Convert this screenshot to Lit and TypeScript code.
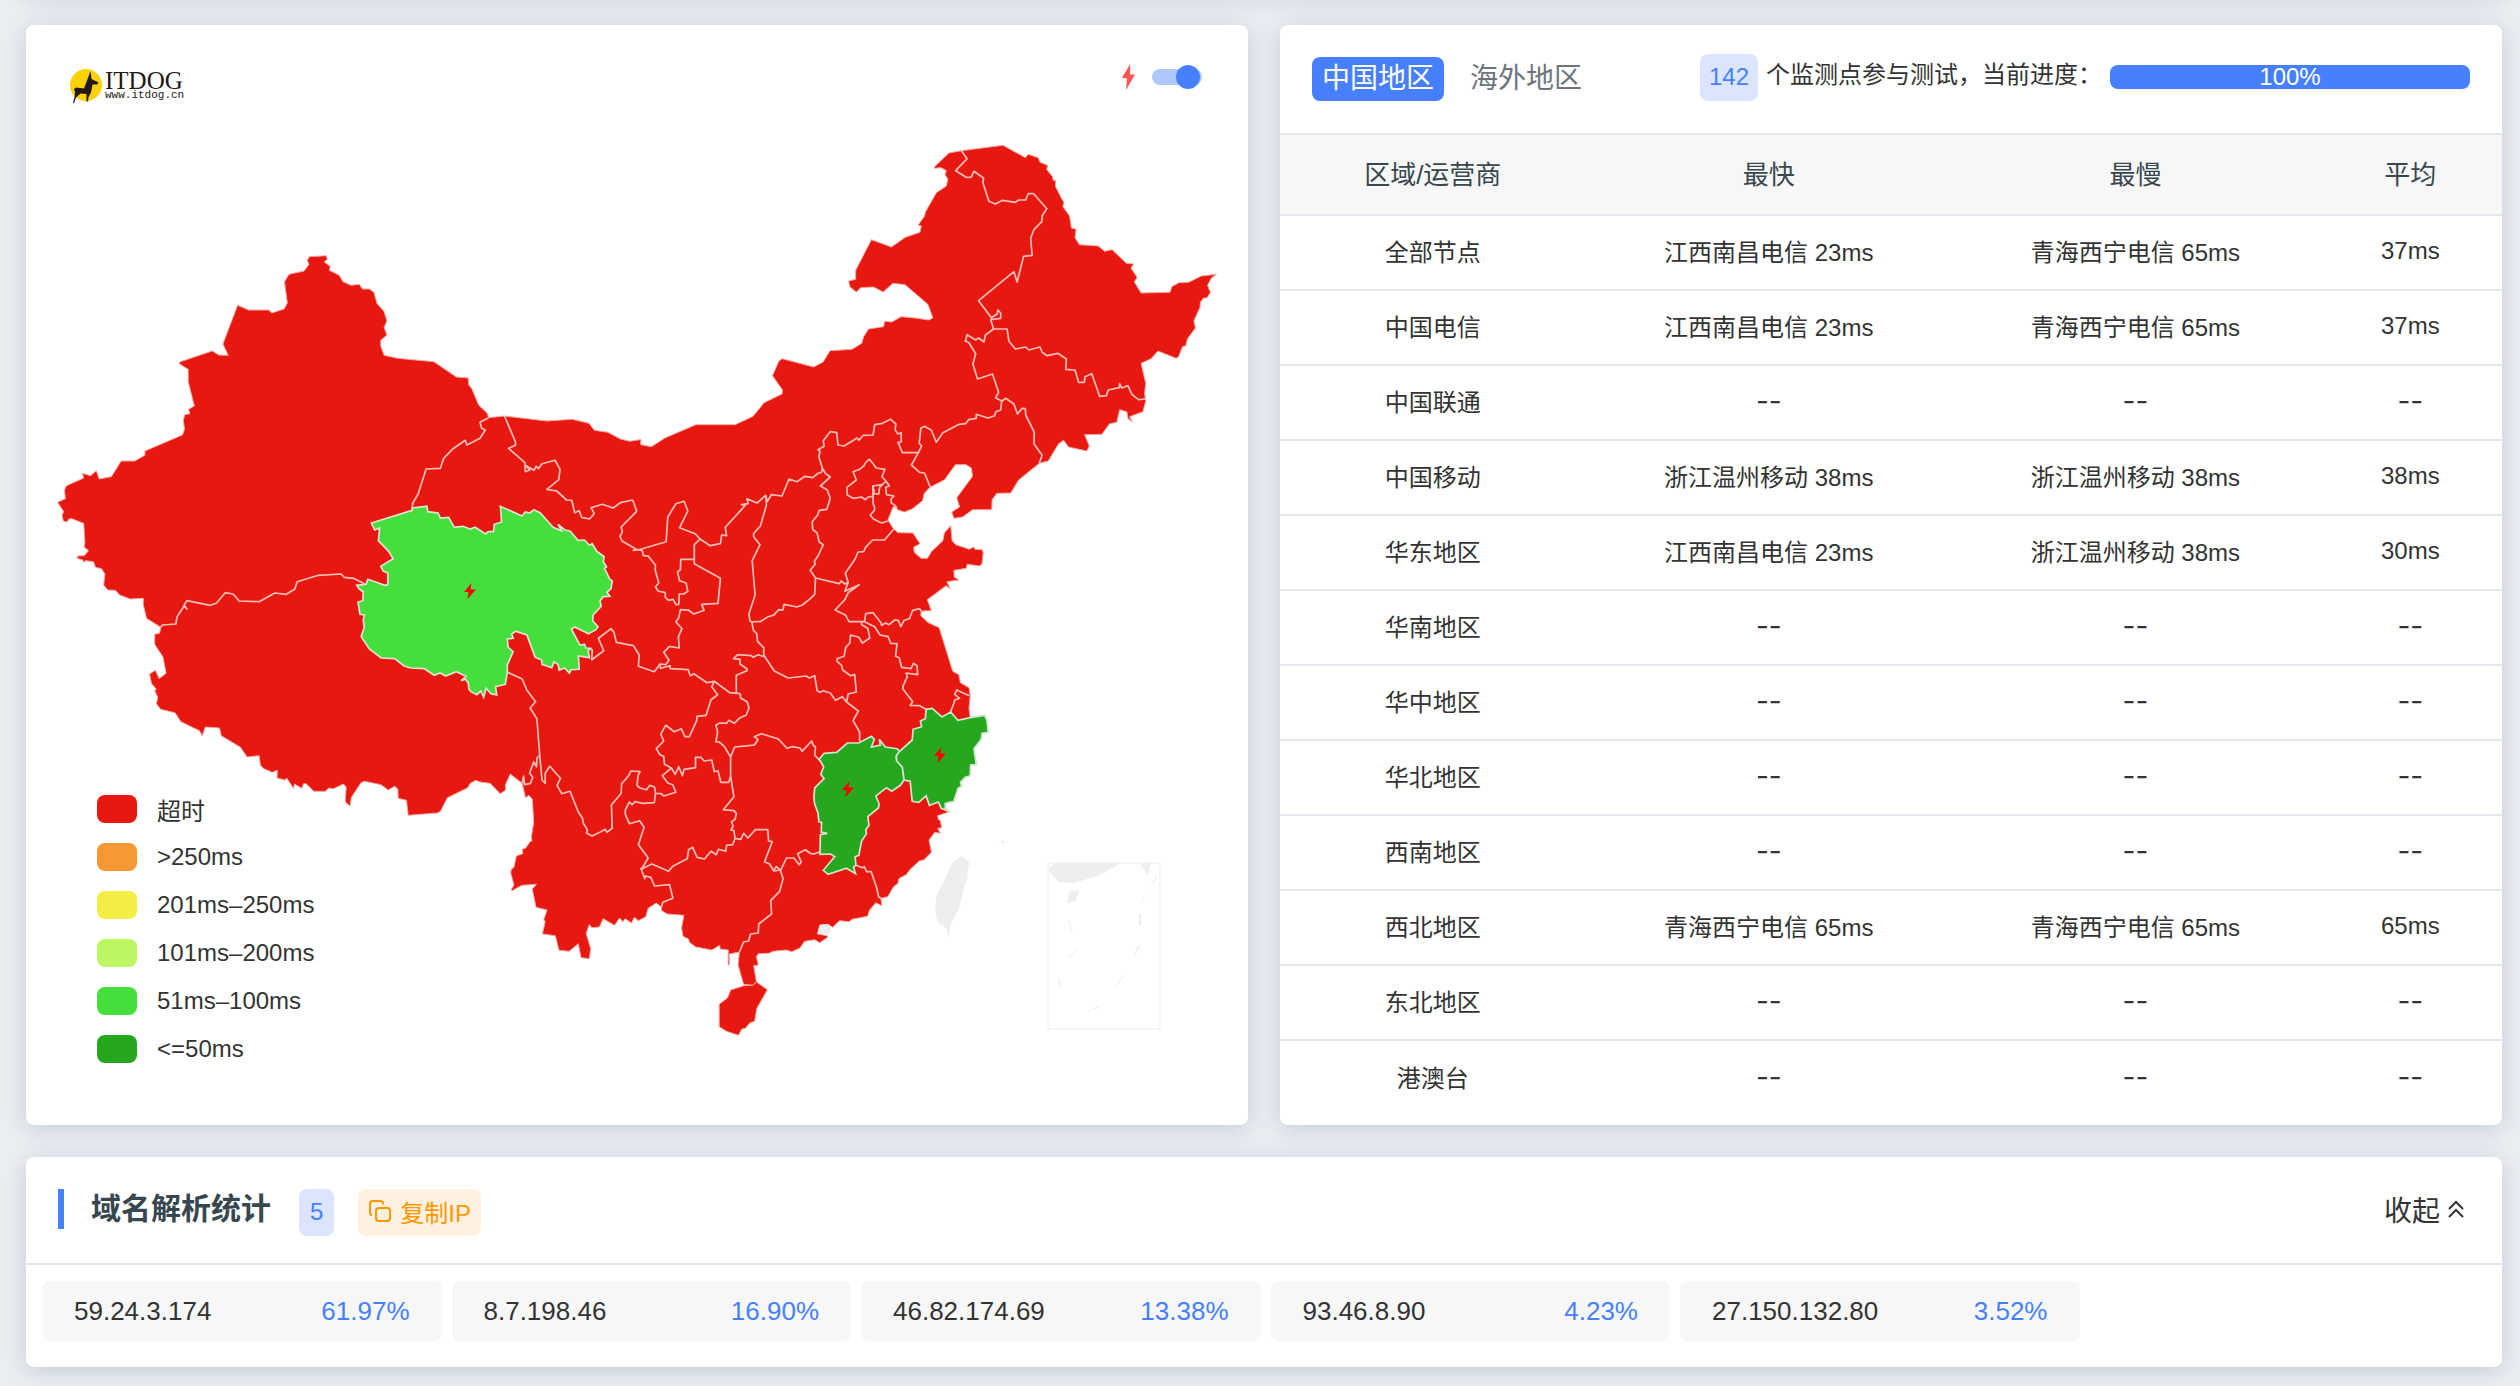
import { LitElement, html, css, svg } from "lit";
import { customElement, state } from "lit/decorators.js";

/* ---------- map geometry ---------- */

// Coordinates are digitised on overlapping sheets, each with its own origin and scale.
const sheet = (ox: number, oy: number, sx: number, sy: number) => (points: string): string =>
  points
    .trim()
    .split(/\s+/)
    .map((p) => {
      const [x, y] = p.split(",").map(Number);
      return `${(ox + x / sx).toFixed(1)},${(oy + y / sy).toFixed(1)}`;
    })
    .join(" ");

const northEast = sheet(700, 100, 2.8, 3);
const west = sheet(0, 240, 2.45, 3);
const east = sheet(600, 380, 2.45, 3);
const south = sheet(480, 640, 2.1778, 3);
const southWest = sheet(60, 640, 2.9037, 3);

const MAINLAND = [
  west(`141,787 160,776 158,750 162,738 205,714 202,700 222,707 236,692 243,717 273,710 297,663 330,663 355,646
    355,633 447,585 452,568 449,540 453,524 465,521 462,508 476,498 461,425 461,388 440,372 440,366 520,333
    536,345 559,346 546,312 582,196 609,210 658,210 666,219 696,207 704,189 697,125 708,103 745,93 757,73
    753,61 758,50 799,47 802,58 794,66 809,79 807,91 831,106 840,125 860,136 880,133 888,147 905,147 916,157
    924,191 941,215 948,243 941,262 948,285 933,301 933,319 941,346 974,355 1063,365 1118,411 1147,414
    1148,434 1156,446 1173,496 1194,520 1197,533 1236,528 1340,543 1402,538 1443,550 1456,571 1489,577
    1520,597 1543,604 1568,599`),
  east(`100,179 100,194 126,200 159,174 235,134 331,134 375,109 402,68 446,42`),
  northEast(`231,870 203,827 221,783 230,776 318,801 345,786 364,752 426,748 453,730 458,710 472,687 514,680
    517,664 537,666 563,650 603,654 640,660 652,654 638,613 574,554 540,550 513,576 486,561 450,563 438,576
    420,561 416,543 436,538 436,511 480,419 536,441 575,412 616,397 620,378 611,375 629,348 631,336 662,278
    690,258 694,237 686,224 690,212 675,203 657,205 657,200 697,159 732,152 848,136 911,173 919,163 947,173
    952,187 973,196 971,209 987,230 989,241 996,242 995,259 1015,301 1019,307 1016,320 1035,348 1040,384
    1053,388 1050,413 1062,434 1115,438 1133,454 1154,449 1194,490 1214,492 1207,505 1224,532 1216,546
    1235,579 1316,577 1321,560 1341,548 1368,547 1404,528 1446,523 1432,534 1421,556 1429,577 1420,593
    1409,595 1401,607 1400,622 1383,662 1387,684 1365,716 1360,737 1351,740 1340,770 1333,775 1282,753
    1263,776 1235,790 1248,850 1245,880 1248,903 1240,935 1203,950 1211,967 1198,955 1195,935 1175,929
    1167,967 1147,971 1125,1003 1077,1004 1090,1038 1083,1053 1032,1041 1018,1021 1004,1031 975,1083
    950,1090 892,1140 870,1179 831,1180 818,1199 817,1229 763,1229 735,1251 711,1255 705,1236 727,1221
    719,1193 763,1129 760,1104 745,1094 715,1094 685,1139 644,1162 628,1180 623,1202 594,1227 572,1236
    553,1229 549,1218 540,1222 526,1260 540,1284 554,1298 596,1299 616,1331 598,1342 600,1357 619,1375
    637,1375 648,1355 680,1322 684,1299 702,1277 706,1322 716,1334 754,1348 766,1341 770,1348 790,1349
    793,1357 790,1390 784,1398 748,1393 746,1405 711,1411`),
  east(`868,592 879,600 850,605 858,626 848,617 802,659 812,692 787,693 786,707 804,728 831,743 864,874 879,884
    883,908 904,923 907,947 904,985 907,1013 942,1006 948,1020 951,1057 936,1060 934,1078 916,1106 922,1154
    908,1155 907,1187 895,1192 883,1207 886,1218 877,1225 867,1264 846,1270 846,1285 856,1295 847,1299
    827,1307 829,1319 834,1322 837,1343 827,1345 834,1360 820,1357 806,1380 812,1417 793,1440 783,1442
    760,1468 750,1484`),
  south(`912,716 910,730 900,741 888,770 873,775 875,797 862,788 848,811 844,829 810,838 804,845 783,842
    768,862 758,853 740,855 735,882 756,887 757,892 740,908 729,899 707,904 697,924 679,935 667,930 638,934
    629,940 606,941 602,950 606,975 596,977 602,1026 594,1036 574,1033 562,975 565,936 543,942 543,975
    540,973 541,930 523,927 522,916 505,930 470,921 456,907 454,897 442,889 439,864 444,826 408,822 396,812
    395,801 384,789 366,805 361,830 345,842 336,832 330,849 316,836 311,845 304,834 293,856 268,836 260,861
    244,863 238,854 231,880 241,926 238,956 220,953 214,911 194,934 172,931 164,887 136,882 142,845 139,839
    146,810 122,802 114,747 123,733 91,736 70,752 68,749 74,735 67,700 68,688 74,682 79,648 93,641 93,626
    99,625 109,605 113,603 112,590 117,547 114,477 106,466 99,473 92,430 66,402 55,435 56,450 44,461 22,430
    0,426`),
  southWest(`1207,421 1190,431 1184,443 1125,473 1105,514 1096,519 1011,526 1006,481 982,475 981,447 972,439
    953,450 932,434 884,424 874,428 846,472 842,498 828,486 831,441 823,432 794,446 780,444 771,454 737,454
    715,431 707,431 702,445 681,432 678,445 658,414 654,420 630,414 631,391 616,397 592,386 582,376 578,347
    543,351 524,322 468,287 463,264 422,261 413,287 405,272 351,245 334,218 292,208 280,191 284,172 275,152
    280,148 266,131 260,102 277,91 288,116 308,100 299,51 275,13 275,0`),
  west(`379,1183 391,1180 394,1162 359,1135 351,1094 351,1075 319,1077 293,1065 283,1051 264,1050 254,1035
    257,1002 249,986 234,982 229,965 210,962 205,967 203,960 189,955 190,948 206,947 217,932 206,921 208,906
    205,850 176,836 168,837 165,846 155,843 152,825 156,815`),
].join(" ");

const HAINAN = south(`602,1026 626,1049 603,1105 598,1144 588,1148 578,1165 570,1167 563,1186 537,1174 521,1160
  521,1093 539,1074 546,1050 575,1037 594,1036`);

const QINGHAI = west(`910,849 1010,811 1010,804 1046,799 1048,815 1073,819 1079,834 1099,832 1113,862 1134,859
  1152,867 1164,862 1190,882 1196,875 1209,875 1211,853 1229,846 1226,799 1279,828 1287,816 1298,819 1308,809
  1323,818 1355,862 1376,872 1367,853 1383,869 1397,874 1416,901 1432,900 1444,916 1451,911 1462,934 1480,950
  1478,965 1486,980 1481,985 1494,1018 1500,1023 1497,1046 1487,1057 1494,1069 1478,1070 1470,1082 1473,1099
  1453,1125 1452,1142 1465,1160 1460,1169 1442,1181 1408,1161 1400,1167 1421,1216 1432,1213 1436,1224
  1446,1225 1441,1234 1444,1253 1417,1248 1419,1288 1399,1289 1395,1299 1383,1284 1370,1290 1367,1273
  1357,1265 1352,1283 1328,1273 1327,1260 1311,1251 1291,1185 1263,1174 1254,1182 1257,1195 1243,1197
  1245,1222 1257,1235 1243,1275 1243,1297 1238,1333 1214,1340 1217,1365 1203,1361 1191,1345 1185,1371
  1178,1353 1168,1364 1154,1355 1149,1348 1147,1328 1140,1318 1130,1322 1142,1309 1118,1295 1092,1308
  1078,1299 1064,1306 1040,1286 1006,1284 990,1278 967,1256 934,1254 905,1227 885,1190 892,1163 890,1139
  893,1125 882,1123 877,1086 889,1082 890,1056 880,1047 874,1036 897,1033 901,1018 943,1036 950,1034 950,999
  939,993 933,979 963,956 952,934 927,902 930,864 918,870`);

const JIANGXI = east(`537,1138 549,1120 580,1117 606,1089 634,1089 665,1069 672,1078 665,1101 687,1095 684,1078
  699,1101 728,1106 734,1114 726,1128 727,1142 741,1162 745,1199 736,1216 715,1234 702,1223 676,1248 684,1273
  682,1284 656,1310 659,1336 651,1350 653,1361 641,1383 634,1426 625,1430 627,1455 621,1462 626,1481 604,1465
  559,1483 547,1471 575,1430 565,1422 539,1423 540,1364 557,1360 542,1356 543,1328 536,1325 534,1299 526,1272
  524,1255 526,1224 549,1196 541,1183 548,1160`);

const ZHEJIANG = east(`799,988 814,985 838,1011 859,996 877,1021 907,1013 942,1006 948,1020 951,1057 936,1060
  934,1078 916,1106 922,1154 908,1155 907,1187 895,1192 883,1207 886,1218 877,1225 867,1264 846,1270 846,1285
  856,1295 836,1285 829,1266 807,1276 799,1247 781,1267 765,1264 760,1204 745,1200 741,1162 727,1142 726,1128
  734,1114 765,1080 767,1048 788,1040 785,1023 797,1016`);

const BORDERS: string[] = [
  west(`1197,533 1176,547 1180,565 1189,570 1176,595 1144,615 1140,601 1110,626 1087,655 1079,685 1044,687
    1024,763 1011,790 1010,804`),
  west(`894,1032 866,1015 843,1012 836,1002 780,1006 728,1025 722,1048 701,1063 673,1059 635,1085 586,1083
    571,1062 552,1058 530,1090 515,1096 458,1082 451,1095 458,1107 451,1098 434,1130 431,1152 398,1155 394,1162`),
  west(`1236,528 1263,606 1263,616 1246,625 1286,668 1287,695 1298,690 1287,676 1308,691 1314,679 1319,686
    1328,671 1360,661 1372,688 1369,719 1340,748 1364,753 1388,780 1401,781 1408,818 1419,812 1425,832
    1444,837 1456,821 1448,803 1476,793 1502,804 1520,788 1550,780`),
  east(`80,360 90,394 52,441 55,455 49,469 54,483 92,510`),
  east(`80,511 95,509 162,485 166,411 186,371 206,364 215,393 195,443 233,461 245,477 231,494 231,538 198,538
    197,569 190,576 195,602 211,609 215,634 205,642 194,642 193,673 186,674 179,658 168,661 160,652 160,638
    142,633 136,620 144,609 135,569 136,556 118,528 106,527 104,512 95,509`),
  east(`231,538 231,551 295,595 289,670 249,673 255,691 230,702 216,690 197,689 193,713 186,726 201,746
    192,770 194,804 170,799 156,817 169,841 161,854 147,852 148,865 172,857 172,866 216,869 221,887 230,881
    262,908 280,904 318,938 344,941`),
  east(`245,477 270,497 295,491 298,465 310,467 307,442 356,376 347,374 363,371 360,356 385,369 406,346
    410,364 420,344 446,348 463,297 483,305 502,289 521,293 535,279 543,277`),
  west(`1446,1225 1451,1230 1450,1259 1479,1232 1466,1195 1497,1166 1504,1177 1510,1207 1552,1217`),
  east(`82,797 96,825 94,859 133,875 147,852`),
  east(`334,940 334,886 360,872 360,866 343,852 343,838 327,836 337,824 371,827 375,832 388,824 401,830`),
  east(`406,346 408,374 393,438 376,461 377,471 392,494 373,542 380,645 365,701 367,722 372,726 376,752
    384,760 386,784 401,803 401,825 427,873 461,894 505,888 513,894 526,887 532,932 539,937 547,932 564,939
    577,961 594,950 604,966 633,993 620,1022 636,1056 636,1084`),
  east(`543,277 545,265 552,280 564,291 540,318 557,330 564,355 556,388 537,391 533,405 520,425 521,448
    532,459 537,486 547,494 534,528 525,544 527,553 515,571 528,594 526,643 516,655 496,675 483,681 451,673
    448,690 438,689 425,706 412,710 394,724 372,726`),
  east(`545,265 536,230 539,215 534,209 549,199 547,182 564,155 580,158 583,195 598,198 630,174 634,181
    645,166 669,165 673,134 692,130 712,118 725,132 723,149 730,162 738,158 738,186 730,187 741,218 780,218
    788,198 782,190 786,145 795,139 812,151 824,187 840,158 880,133 896,131 903,119 922,115 922,103 950,114
    966,108 970,95 982,90 984,64`),
  east(`780,218 763,255 783,277 795,279 809,321`),
  east(`660,237 650,249 647,257 636,268 620,275 628,300 605,322 606,345 620,355 641,351 650,359 657,351
    669,349 668,318 691,314 701,304 691,290 698,268 677,264 660,237`),
  east(`701,304 709,318 700,322 702,344 720,348 713,357 714,370 722,375 726,388`),
  east(`669,349 669,370 673,384 672,392 662,405 670,417 690,429 705,423`),
  east(`668,318 672,336 668,342 683,342 685,322 693,312`),
  east(`720,447 697,480 668,480 650,503 646,515 632,516 625,537 601,580 608,607 600,634 635,614 608,638
    600,659 576,690 602,706 610,725 648,725 651,701 669,698 689,729 690,736 700,729 708,734 722,720 731,721
    737,740 745,721 758,716 766,691 783,686 787,693`),
  east(`528,594 586,611 591,603 600,612 608,607`),
  east(`641,725 641,734 656,745 661,774 643,789 634,772 614,765 612,789 602,802 598,829 581,836 581,844
    592,856 594,869 614,887 624,884 628,936 608,942 604,966`),
  east(`648,725 673,740 686,765 706,770 712,790 728,791 724,829 733,833 739,862 762,866 768,850 777,858
    778,884 750,879 753,890 742,919 742,927 766,965 760,976 783,977 799,988`),
  east(`859,996 870,959 881,955 869,943 874,930 905,947`),
  east(`280,904 274,920 288,944 272,959 260,1006 238,1009 237,1022 219,1070 208,1070 199,1046 182,1055
    161,1036 149,1062 156,1083 138,1106 147,1124 156,1129 158,1153 175,1164 184,1183 193,1160 202,1187
    206,1168 234,1163 234,1132 247,1132 255,1143 274,1140 280,1175 289,1172 296,1207 315,1207 320,1190
    320,1131 305,1100 292,1086 284,1086 288,1057 284,1036 293,1029 310,1030 316,1021 329,1030 343,1013
    358,1006 365,984 361,966 344,953 344,941`),
  east(`320,1131 330,1101 347,1099 378,1095 387,1079 378,1070 395,1061 437,1077 458,1105 471,1100 490,1104
    495,1114 519,1083 522,1095 528,1101 526,1125 537,1140`),
  east(`175,1164 153,1187 166,1209 178,1214 186,1237 156,1248 150,1241 136,1240 134,1222 122,1216 114,1229
    98,1224 91,1217 93,1187 98,1175 76,1173 70,1187 53,1211 52,1240 28,1275 30,1345 17,1357 13,1348 0,1357`),
  east(`136,1240 133,1268 104,1270 86,1265 79,1274 72,1266 62,1290 62,1303 72,1331 97,1322 108,1342 94,1394
    118,1434 102,1467 127,1452 168,1474 178,1459 214,1436 217,1409 227,1402 238,1432 256,1437 272,1414
    285,1424 290,1408 308,1414 310,1396 325,1394 331,1375`),
  east(`320,1190 328,1250 302,1289 328,1292 334,1300 331,1318 322,1326 326,1338 321,1350 328,1352 331,1375
    345,1378 352,1360 362,1374 381,1349 411,1349 413,1383 422,1385 403,1446 415,1451 426,1473 443,1470
    457,1434 475,1434 488,1454 493,1446 484,1421 503,1409 515,1420 524,1422 539,1415`),
  south(`819,676 833,683 837,680 842,695 852,695 864,743 868,770 873,775`),
  south(`638,694 645,680 654,690 660,716 652,755 633,782 635,822 607,852 606,879 589,882 585,903 574,906
    565,936`),
  south(`350,683 359,716 360,708 372,712 380,738 413,734 420,775 398,787 395,801`),
  south(`261,577 244,588 232,579 234,569 225,550 223,534 214,516 196,454 178,461 168,436 175,415 152,379
    142,400 142,430 135,420 130,345 124,236 109,204 121,185 102,150 92,117 60,97`),
  south(`130,345 124,355 123,380 117,366 108,400 115,412 110,430 97,434 95,408 92,430`),
  northEast(`732,152 748,176 716,212 745,232 759,232 767,214 794,234 792,248 809,304 827,312 847,301 883,307
    892,300 912,300 919,281 934,281 971,326 958,347 957,365 935,389 926,414 930,466 906,469 888,546 879,515
    780,602 816,653 832,642 834,630 842,640 842,655 814,659 822,687 860,687 865,724 883,747 912,741 921,750
    952,741 958,757 972,767 1002,760 1026,777 1024,808 1050,810 1060,847 1076,847 1078,830 1097,821 1119,889
    1138,887 1143,870 1174,863 1175,851 1181,864 1198,857 1210,884 1228,899 1248,897`),
  northEast(`822,687 799,705 795,726 780,714 772,720 748,704 743,724 752,727 772,761 764,792 777,837 819,822
    836,877 828,894 846,903 856,895 879,912 889,942 902,925 911,926 912,945 936,997 935,1031 958,1066
    950,1090`),
];

const INACTIVE: string[] = [
  south(`1050,648 1066,668 1062,690 1062,712 1054,745 1042,811 1026,850 1020,893 1016,866 998,848 991,815
    994,768 1029,668`),
  south(`1141,600 1141,609 1131,607`),
  south(`735,882 740,855 758,853 765,868 760,882`),
  south(`1252,670 1396,670 1348,706 1293,730 1260,726 1237,690`),
  south(`1438,670 1462,670 1454,706`),
  south(`1284,754 1305,750 1297,782 1277,790`),
  south(`1434,824 1440,824 1440,855 1434,855`),
  south(`1435,915 1436,922 1427,942 1425,940`),
  south(`1259,1016 1264,1022 1266,1043 1261,1034`),
];

const DASHES: string[] = [
  "1475,710 1463,735", "1448,765 1440,787", "1282,840 1289,875", "1298,926 1284,952",
  "1402,1005 1383,1046", "1347,1100 1326,1112",
].map(south);

const NODES = [
  { x: 464, y: 583 },
  { x: 934, y: 747 },
  { x: 842, y: 781 },
];

/* ---------- data ---------- */

const LEGEND = [
  { tone: "timeout", label: "超时" },
  { tone: "over250", label: ">250ms" },
  { tone: "to250", label: "201ms–250ms" },
  { tone: "to200", label: "101ms–200ms" },
  { tone: "to100", label: "51ms–100ms" },
  { tone: "to50", label: "<=50ms" },
];

const NONE = "--";
const ROWS: [string, string, string, string][] = [
  ["全部节点", "江西南昌电信 23ms", "青海西宁电信 65ms", "37ms"],
  ["中国电信", "江西南昌电信 23ms", "青海西宁电信 65ms", "37ms"],
  ["中国联通", NONE, NONE, NONE],
  ["中国移动", "浙江温州移动 38ms", "浙江温州移动 38ms", "38ms"],
  ["华东地区", "江西南昌电信 23ms", "浙江温州移动 38ms", "30ms"],
  ["华南地区", NONE, NONE, NONE],
  ["华中地区", NONE, NONE, NONE],
  ["华北地区", NONE, NONE, NONE],
  ["西南地区", NONE, NONE, NONE],
  ["西北地区", "青海西宁电信 65ms", "青海西宁电信 65ms", "65ms"],
  ["东北地区", NONE, NONE, NONE],
  ["港澳台", NONE, NONE, NONE],
];

const ADDRESSES = [
  { ip: "59.24.3.174", share: "61.97%" },
  { ip: "8.7.198.46", share: "16.90%" },
  { ip: "46.82.174.69", share: "13.38%" },
  { ip: "93.46.8.90", share: "4.23%" },
  { ip: "27.150.132.80", share: "3.52%" },
];

const base = css`
  * { box-sizing: border-box; }
  button { font: inherit; color: inherit; background: none; border: 0; padding: 0; cursor: pointer; }
  ul { list-style: none; margin: 0; padding: 0; }
`;

@customElement("latency-map")
export class LatencyMap extends LitElement {
  static styles = [
    base,
    css`
      :host { display: grid; }
      .map, .overlay { grid-area: 1 / 1; }
      .map { display: block; width: 100%; height: auto; }
      .province { fill: #e6180f; stroke: #f3a8a3; stroke-width: 1; stroke-linejoin: round; }
      .border { fill: none; stroke: #f9bfbb; stroke-width: 1.7; stroke-linejoin: round; }
      .fast { fill: #45de3c; stroke: #dde4d2; stroke-width: 1.7; }
      .fastest { fill: #26a71f; stroke: #cfe6cd; stroke-width: 1.7; }
      .inactive { fill: #eeeeee; }
      .frame { fill: none; stroke: #f6f6f6; stroke-width: 2; }
      .dash { fill: none; stroke: #eeeeee; stroke-width: 1; }
      .node { fill: #ff0000; }
      .overlay { display: flex; flex-direction: column; justify-content: space-between; padding: 36px 46px 62px 44px; }
      .top { display: flex; justify-content: space-between; align-items: flex-start; }
      .logo { display: block; width: 120px; height: 48px; }
      .disc { fill: #fbd108; }
      .dog { fill: #231815; }
      .brand { font: 25px "Liberation Serif", serif; fill: #231815; }
      .site { font: 11px "Liberation Mono", monospace; fill: #231815; }
      .effect { display: flex; align-items: center; gap: 17px; height: 32px; }
      .bolt { display: block; width: 13px; height: 26px; fill: #ff5252; }
      .switch {
        appearance: none; margin: 0; width: 50px; height: 16px; border-radius: 8px;
        background: #aec7ff; display: flex; align-items: center; cursor: pointer;
      }
      .switch::before { content: ""; width: 24px; height: 24px; border-radius: 50%; background: #4680ff; flex: none; }
      .switch:checked { justify-content: flex-end; padding-right: 2px; }
      .legend { display: grid; gap: 20px; padding-left: 27px; }
      .item { display: flex; align-items: center; gap: 20px; height: 28px; font-size: 24px; color: #333333; }
      .swatch { width: 40px; height: 28px; border-radius: 8px; }
      .timeout { background: #e6180f; }
      .over250 { background: #f79834; }
      .to250 { background: #f6ed44; }
      .to200 { background: #bef663; }
      .to100 { background: #45de3c; }
      .to50 { background: #26a71f; }
    `,
  ];

  render() {
    return html`
      <svg class="map" viewBox="26 25 1222 1100" role="img" aria-label="中国地区">
        <polygon class="province" points=${MAINLAND}></polygon>
        <polygon class="province" points=${HAINAN}></polygon>
        ${BORDERS.map((b) => svg`<polyline class="border" points=${b}></polyline>`)}
        <polygon class="fast" points=${QINGHAI}></polygon>
        <polygon class="fastest" points=${JIANGXI}></polygon>
        <polygon class="fastest" points=${ZHEJIANG}></polygon>
        <rect class="frame" x="1048" y="863" width="112" height="166"></rect>
        ${INACTIVE.map((p) => svg`<polygon class="inactive" points=${p}></polygon>`)}
        ${DASHES.map((p) => svg`<polyline class="dash" points=${p}></polyline>`)}
        ${NODES.map(
          (n) => svg`<path class="node" transform="translate(${n.x} ${n.y})" d="M7.5 0 0 9H4.5L3.5 16 12 6.5H6.5Z"></path>`
        )}
      </svg>
      <div class="overlay">
        <div class="top">
          <svg class="logo" viewBox="0 0 120 48" role="img" aria-label="ITDOG www.itdog.cn">
            <circle class="disc" cx="16" cy="24" r="16"></circle>
            <path class="dog" d="M20.500 10 21.500 18 28.500 21.500 27 23.500 22.500 23.500 21 31.500 18.500 36 18 40.500H16.500L16.500 33 10.500 32.500 6 36.500 4 42.500 3 42 4.500 36 5 31 4 28 6 26.500 14 27.500 17 19.500Z"></path>
            <text class="brand" x="35" y="28">ITDOG</text>
            <text class="site" x="35" y="37">www.itdog.cn</text>
          </svg>
          <label class="effect">
            <svg class="bolt" viewBox="0 0 13 26" aria-hidden="true"><path d="M8.300 0 0 13.700 5 14.400 4 26 13 10.400H8Z"></path></svg>
            <input class="switch" type="checkbox" checked />
          </label>
        </div>
        <ul class="legend">
          ${LEGEND.map((l) => html`<li class="item"><span class="swatch ${l.tone}"></span>${l.label}</li>`)}
        </ul>
      </div>
    `;
  }
}

@customElement("region-table")
export class RegionTable extends LitElement {
  @state() private tab = 0;

  static styles = [
    base,
    css`
      :host { display: block; }
      .head { display: flex; align-items: center; justify-content: space-between; height: 110px; padding: 0 32px; border-bottom: 2px solid #e2e8ee; }
      .tabs { display: flex; gap: 16px; }
      .tab { height: 44px; padding: 0 10px; border-radius: 8px; font-size: 28px; line-height: 42px; color: #6c757d; }
      .active { background: #4680ff; color: #ffffff; }
      .status { display: flex; align-items: center; gap: 8px; padding-bottom: 4px; font-size: 24px; color: #333333; white-space: nowrap; }
      .count { display: block; height: 47px; line-height: 46px; padding: 0 9px; border-radius: 8px; background: #dbe5ff; color: #4680ff; }
      .progress { line-height: 44px; padding-bottom: 4px; }
      .bar { width: 360px; height: 24px; border-radius: 8px; background: #e9ecef; }
      .fill { height: 24px; line-height: 24px; border-radius: 8px; background: #4680ff; color: #ffffff; text-align: center; }
      .table { width: 100%; border-collapse: separate; border-spacing: 0; table-layout: fixed; text-align: center; font-size: 24px; color: #333333; }
      .wide { width: 30%; }
      .mid { width: 25%; }
      .slim { width: 15%; }
      th { height: 81px; padding: 0 0 4px; font-size: 26px; font-weight: 400; color: #37474f; background: #f7f7f7; border-bottom: 2px solid #e2e8ee; }
      td { height: 75px; padding: 0 0 4px; border-bottom: 2px solid #e2e8ee; }
      tr:last-child td { border-bottom: 0; }
      .none { font-family: Inter, sans-serif; font-size: 28px; }
    `,
  ];

  render() {
    return html`
      <div class="head">
        <div class="tabs">
          ${["中国地区", "海外地区"].map(
            (t, i) => html`<button class="tab ${i === this.tab ? "active" : ""}" @click=${() => (this.tab = i)}>${t}</button>`
          )}
        </div>
        <div class="status">
          <span class="count">142</span>
          <span class="progress">个监测点参与测试，当前进度：</span>
          <div class="bar"><div class="fill">100%</div></div>
        </div>
      </div>
      <table class="table">
        <colgroup><col class="mid" /><col class="wide" /><col class="wide" /><col class="slim" /></colgroup>
        <thead>
          <tr><th>区域/运营商</th><th>最快</th><th>最慢</th><th>平均</th></tr>
        </thead>
        <tbody>
          ${ROWS.map((r) => html`<tr>${r.map((c) => html`<td class=${c === NONE ? "none" : "value"}>${c}</td>`)}</tr>`)}
        </tbody>
      </table>
    `;
  }
}

@customElement("resolve-stats")
export class ResolveStats extends LitElement {
  static styles = [
    base,
    css`
      :host { display: block; }
      .head { display: flex; align-items: flex-start; height: 108px; padding: 32px 38px 0 32px; border-bottom: 2px solid #e4e6ec; }
      .title { margin: 0; height: 40px; line-height: 40px; padding-left: 27px; border-left: 6px solid #4680ff; font-size: 30px; font-weight: 700; color: #37474f; }
      .count { margin-left: 28px; height: 47px; line-height: 46px; padding: 0 11px; border-radius: 8px; background: #dbe5ff; color: #4680ff; font-size: 24px; }
      .copy { display: flex; align-items: center; gap: 8px; margin-left: 24px; height: 47px; padding: 0 10px 3px; border-radius: 8px; background: #fff1df; color: #ff9800; font-size: 24px; }
      .copy-icon { display: block; width: 24px; height: 24px; fill: none; stroke: currentColor; stroke-width: 2; }
      .fold { display: flex; align-items: center; gap: 8px; margin-left: auto; height: 40px; font-size: 28px; color: #333333; }
      .fold-icon { display: block; width: 16px; height: 20px; fill: none; stroke: currentColor; stroke-width: 2; }
      .list { display: grid; grid-template-columns: repeat(6, 1fr); gap: 10px; padding: 16px 13px 26px 16px; }
      .chip { display: flex; align-items: center; justify-content: space-between; height: 60px; padding: 0 32px; border-radius: 8px; background: #f7f7f7; font-size: 26px; color: #333333; }
      .share { color: #4680ff; }
    `,
  ];

  render() {
    return html`
      <div class="head">
        <h2 class="title">域名解析统计</h2>
        <span class="count">5</span>
        <button class="copy">
          <svg class="copy-icon" viewBox="0 0 24 24" aria-hidden="true">
            <rect x="8" y="9" width="14" height="13" rx="3"></rect>
            <path d="M4 16C2.500 16 2 15 2 13.500V5C2 3 3 2 5 2H12.500C14 2 15 3 15 4.500V5.500"></path>
          </svg>
          复制IP
        </button>
        <button class="fold">
          收起
          <svg class="fold-icon" viewBox="0 0 16 20" aria-hidden="true"><path d="M1 10 8 3 15 10M1 18 8 11 15 18"></path></svg>
        </button>
      </div>
      <ul class="list">
        ${ADDRESSES.map((a) => html`<li class="chip"><span>${a.ip}</span><span class="share">${a.share}</span></li>`)}
      </ul>
    `;
  }
}

@customElement("app-root")
export class AppRoot extends LitElement {
  static styles = [
    base,
    css`
      :host { display: block; min-height: 100vh; background: #ebeff4; font-family: "Liberation Sans", "Noto Sans CJK SC", sans-serif; overflow: hidden; }
      .page { display: grid; gap: 32px; padding: 0 18px 19px 26px; margin-top: -47px; }
      .card { background: #ffffff; border-radius: 8px; box-shadow: 0 4px 24px rgba(69, 90, 100, 0.24); }
      .previous { height: 40px; }
      .pair { display: grid; grid-template-columns: 1fr 1fr; gap: 32px; }
    `,
  ];

  render() {
    return html`
      <main class="page">
        <div class="card previous"></div>
        <div class="pair">
          <latency-map class="card"></latency-map>
          <region-table class="card"></region-table>
        </div>
        <resolve-stats class="card"></resolve-stats>
      </main>
    `;
  }
}
